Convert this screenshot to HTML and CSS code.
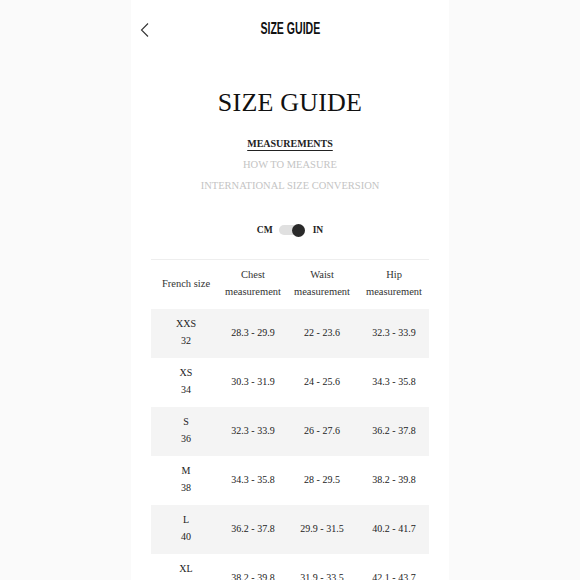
FILE: index.html
```html
<!DOCTYPE html>
<html>
<head>
<meta charset="utf-8">
<link rel="stylesheet" href="styles.css">
</head>
<body>
<div class="panel">
  <header class="topbar">
    <svg class="back" width="10" height="16" viewBox="0 0 10 16"><path d="M8 1.5 L1.5 8 L8 14.5" fill="none" stroke="#333" stroke-width="1.1"/></svg>
    <div class="top-title">SIZE GUIDE</div>
  </header>
  <h1 class="title">SIZE GUIDE</h1>
  <nav class="tabs">
    <span class="tab active">MEASUREMENTS</span>
    <span class="tab">HOW TO MEASURE</span>
    <span class="tab">INTERNATIONAL SIZE CONVERSION</span>
  </nav>
  <div class="units">
    <span class="unit">CM</span>
    <span class="track"><span class="knob"></span></span>
    <span class="unit">IN</span>
  </div>
  <table class="sizes">
    <colgroup><col class="c1"><col class="c2"><col class="c3"><col class="c4"></colgroup>
    <thead>
      <tr><th>French size</th><th>Chest<br>measurement</th><th>Waist<br>measurement</th><th>Hip<br>measurement</th></tr>
    </thead>
    <tbody>
      <tr><td>XXS<br>32</td><td>28.3 - 29.9</td><td>22 - 23.6</td><td>32.3 - 33.9</td></tr>
      <tr><td>XS<br>34</td><td>30.3 - 31.9</td><td>24 - 25.6</td><td>34.3 - 35.8</td></tr>
      <tr><td>S<br>36</td><td>32.3 - 33.9</td><td>26 - 27.6</td><td>36.2 - 37.8</td></tr>
      <tr><td>M<br>38</td><td>34.3 - 35.8</td><td>28 - 29.5</td><td>38.2 - 39.8</td></tr>
      <tr><td>L<br>40</td><td>36.2 - 37.8</td><td>29.9 - 31.5</td><td>40.2 - 41.7</td></tr>
      <tr><td>XL<br>42</td><td>38.2 - 39.8</td><td>31.9 - 33.5</td><td>42.1 - 43.7</td></tr>
    </tbody>
  </table>
</div>
</body>
</html>
```
FILE: styles.css
```css
html, body {
  margin: 0;
  padding: 0;
  background: #fafafa;
}
body {
  font-family: "Liberation Serif", "Times New Roman", serif;
  color: #222;
}
.panel {
  width: 318px;
  margin: 0 auto;
  background: #fff;
  min-height: 580px;
  padding: 0 20px;
  box-sizing: border-box;
}
.topbar {
  height: 56px;
  display: flex;
  align-items: center;
  justify-content: center;
  position: relative;
}
.back {
  position: absolute;
  left: -11px;
  top: 22px;
}
.top-title {
  font-family: "Liberation Sans", Arial, sans-serif;
  font-weight: bold;
  font-size: 16px;
  color: #111;
  transform: scaleX(0.66);
  padding-top: 1px;
}
.title {
  margin: 32px 0 0;
  font-weight: normal;
  font-size: 26px;
  line-height: 30px;
  text-align: center;
  color: #111;
  letter-spacing: 0.2px;
}
.tabs {
  margin-top: 15px;
  display: flex;
  flex-direction: column;
  align-items: center;
}
.tab {
  font-size: 10.5px;
  line-height: 21px;
  color: #c4c4c4;
}
.tab.active {
  color: #222;
  font-weight: bold;
  font-size: 10px;
  text-decoration: underline;
  text-underline-offset: 3px;
  text-decoration-thickness: 1px;
}
.units {
  margin-top: 27px;
  height: 14px;
  display: flex;
  align-items: center;
  justify-content: center;
  gap: 6px;
}
.unit {
  font-size: 9.5px;
  font-weight: bold;
  color: #222;
}
.track {
  width: 26px;
  height: 10px;
  border-radius: 5px;
  background: #e0e0e0;
  display: flex;
  align-items: center;
  justify-content: flex-end;
  margin-right: 2px;
}
.knob {
  width: 13px;
  height: 13px;
  border-radius: 50%;
  background: #2a2a2a;
  margin: -2px 0;
}
.sizes {
  margin-top: 22px;
  width: 278px;
  border-collapse: collapse;
  table-layout: fixed;
}
.c1 { width: 70px; }
.c2 { width: 64px; }
.c3 { width: 74px; }
.c4 { width: 70px; }
.sizes th {
  font-weight: normal;
  font-size: 10.5px;
  line-height: 17px;
  padding: 6px 0 9px;
  color: #333;
  border-top: 1px solid #eeeeee;
  text-align: center;
  white-space: nowrap;
}
.sizes td {
  font-size: 10px;
  line-height: 17px;
  padding: 6px 0 9px;
  text-align: center;
  color: #222;
  white-space: nowrap;
}
.sizes tbody tr:nth-child(odd) td {
  background: #f4f4f4;
}
```
